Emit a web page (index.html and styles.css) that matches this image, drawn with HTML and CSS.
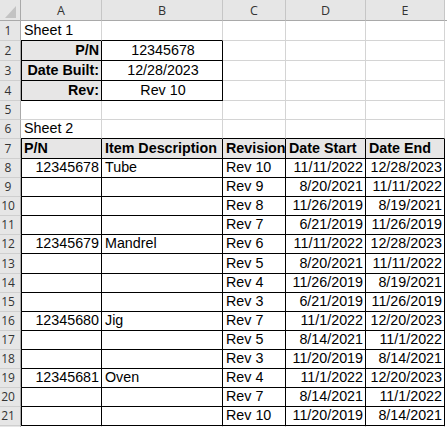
FILE: index.html
```html
<!DOCTYPE html>
<html>
<head>
<meta charset="utf-8">
<link rel="stylesheet" href="styles.css">
</head>
<body>
<div class="sheet">
  <!-- column headers -->
  <div class="corner"><svg width="21" height="21" viewBox="0 0 21 21"><polygon points="16,6 16,18 5,18" fill="#c3c3c3"/></svg></div>
  <div class="h">A</div><div class="h">B</div><div class="h">C</div><div class="h">D</div><div class="h">E</div><div class="h x"></div>

  <!-- 1 -->
  <div class="rh">1</div><div class="c bb">Sheet 1</div><div class="c bb"></div><div class="c"></div><div class="c"></div><div class="c"></div><div class="x"></div>
  <!-- 2 -->
  <div class="rh">2</div><div class="c bx bl fill b r">P/N</div><div class="c bx ctr">12345678</div><div class="c"></div><div class="c"></div><div class="c"></div><div class="x"></div>
  <!-- 3 -->
  <div class="rh">3</div><div class="c bx bl fill b r">Date Built:</div><div class="c bx ctr">12/28/2023</div><div class="c"></div><div class="c"></div><div class="c"></div><div class="x"></div>
  <!-- 4 -->
  <div class="rh">4</div><div class="c bx bl fill b r">Rev:</div><div class="c bx ctr">Rev 10</div><div class="c"></div><div class="c"></div><div class="c"></div><div class="x"></div>
  <!-- 5 -->
  <div class="rh">5</div><div class="c"></div><div class="c"></div><div class="c"></div><div class="c"></div><div class="c"></div><div class="x"></div>
  <!-- 6 -->
  <div class="rh">6</div><div class="c bb">Sheet 2</div><div class="c bb"></div><div class="c bb"></div><div class="c bb"></div><div class="c bb"></div><div class="x"></div>
  <!-- 7 -->
  <div class="rh">7</div><div class="c bx bl fill b">P/N</div><div class="c bx fill b">Item Description</div><div class="c bx fill b">Revision</div><div class="c bx fill b">Date Start</div><div class="c bx fill b">Date End</div><div class="x"></div>
  <!-- 8 -->
  <div class="rh">8</div><div class="c bx bl r">12345678</div><div class="c bx">Tube</div><div class="c bx">Rev 10</div><div class="c bx r">11/11/2022</div><div class="c bx r">12/28/2023</div><div class="x"></div>
  <!-- 9 -->
  <div class="rh">9</div><div class="c bx bl r"></div><div class="c bx"></div><div class="c bx">Rev 9</div><div class="c bx r">8/20/2021</div><div class="c bx r">11/11/2022</div><div class="x"></div>
  <!-- 10 -->
  <div class="rh">10</div><div class="c bx bl r"></div><div class="c bx"></div><div class="c bx">Rev 8</div><div class="c bx r">11/26/2019</div><div class="c bx r">8/19/2021</div><div class="x"></div>
  <!-- 11 -->
  <div class="rh">11</div><div class="c bx bl r"></div><div class="c bx"></div><div class="c bx">Rev 7</div><div class="c bx r">6/21/2019</div><div class="c bx r">11/26/2019</div><div class="x"></div>
  <!-- 12 -->
  <div class="rh">12</div><div class="c bx bl r">12345679</div><div class="c bx">Mandrel</div><div class="c bx">Rev 6</div><div class="c bx r">11/11/2022</div><div class="c bx r">12/28/2023</div><div class="x"></div>
  <!-- 13 -->
  <div class="rh">13</div><div class="c bx bl r"></div><div class="c bx"></div><div class="c bx">Rev 5</div><div class="c bx r">8/20/2021</div><div class="c bx r">11/11/2022</div><div class="x"></div>
  <!-- 14 -->
  <div class="rh">14</div><div class="c bx bl r"></div><div class="c bx"></div><div class="c bx">Rev 4</div><div class="c bx r">11/26/2019</div><div class="c bx r">8/19/2021</div><div class="x"></div>
  <!-- 15 -->
  <div class="rh">15</div><div class="c bx bl r"></div><div class="c bx"></div><div class="c bx">Rev 3</div><div class="c bx r">6/21/2019</div><div class="c bx r">11/26/2019</div><div class="x"></div>
  <!-- 16 -->
  <div class="rh">16</div><div class="c bx bl r">12345680</div><div class="c bx">Jig</div><div class="c bx">Rev 7</div><div class="c bx r">11/1/2022</div><div class="c bx r">12/20/2023</div><div class="x"></div>
  <!-- 17 -->
  <div class="rh">17</div><div class="c bx bl r"></div><div class="c bx"></div><div class="c bx">Rev 5</div><div class="c bx r">8/14/2021</div><div class="c bx r">11/1/2022</div><div class="x"></div>
  <!-- 18 -->
  <div class="rh">18</div><div class="c bx bl r"></div><div class="c bx"></div><div class="c bx">Rev 3</div><div class="c bx r">11/20/2019</div><div class="c bx r">8/14/2021</div><div class="x"></div>
  <!-- 19 -->
  <div class="rh">19</div><div class="c bx bl r">12345681</div><div class="c bx">Oven</div><div class="c bx">Rev 4</div><div class="c bx r">11/1/2022</div><div class="c bx r">12/20/2023</div><div class="x"></div>
  <!-- 20 -->
  <div class="rh">20</div><div class="c bx bl r"></div><div class="c bx"></div><div class="c bx">Rev 7</div><div class="c bx r">8/14/2021</div><div class="c bx r">11/1/2022</div><div class="x"></div>
  <!-- 21 -->
  <div class="rh">21</div><div class="c bx bl r"></div><div class="c bx"></div><div class="c bx">Rev 10</div><div class="c bx r">11/20/2019</div><div class="c bx r">8/14/2021</div><div class="x"></div>
  <!-- tail -->
  <div class="rh tail"></div><div class="c tail"></div><div class="c tail"></div><div class="c tail"></div><div class="c tail"></div><div class="c tail"></div><div class="x"></div>
</div>
</body>
</html>
```

FILE: styles.css
```css
html, body {
  margin: 0;
  padding: 0;
  background: #ffffff;
}

.sheet {
  display: grid;
  width: 447px;
  height: 427px;
  overflow: hidden;
  grid-template-columns: 21px 81px 121px 63px 80px 79px 1fr;
  grid-template-rows: 21px repeat(4, 20px) 19px 19px 20px repeat(5, 19px) 20px repeat(8, 19px) 1fr;
  font-family: "Liberation Sans", Arial, sans-serif;
  font-size: 14.3px;
  color: #000;
}

.sheet > div {
  box-sizing: border-box;
  overflow: hidden;
  white-space: nowrap;
  min-width: 0;
  min-height: 0;
}

.corner {
  background: #e6e6e6;
  border-right: 1px solid #a9a9a9;
  border-bottom: 1px solid #a9a9a9;
  line-height: 0;
}

.h {
  background: #e6e6e6;
  border-right: 1px solid #c6c6c6;
  border-bottom: 1px solid #a9a9a9;
  display: flex;
  align-items: center;
  justify-content: center;
  font-family: "Open Sans", "Noto Sans", sans-serif;
  font-size: 12.5px;
  color: #333;
  padding-top: 1px;
}

.h.x {
  border-right: none;
}

.rh {
  background: #e6e6e6;
  border-right: 1px solid #a9a9a9;
  border-bottom: 1px solid #cfcfcf;
  display: flex;
  align-items: flex-end;
  justify-content: center;
  padding-right: 4px;
  padding-bottom: 1px;
  font-family: "Open Sans", "Noto Sans", sans-serif;
  font-size: 12px;
  line-height: 17px;
  color: #333;
}

.c {
  border-right: 1px solid #d4d4d4;
  border-bottom: 1px solid #d4d4d4;
  display: flex;
  align-items: flex-end;
  justify-content: flex-start;
  padding: 0 1px 1px 3px;
  line-height: 17px;
}

.tail {
  border-bottom: none;
}

.x {
  background: #ffffff;
}

.bb {
  border-bottom-color: #000;
}

.bx {
  border-right-color: #000;
  border-bottom-color: #000;
}

.bl {
  box-shadow: inset 1px 0 0 #000;
}

.fill {
  background: #e7e6e6;
}

.b {
  font-weight: bold;
}

.r {
  justify-content: flex-end;
  padding-right: 2px;
}

.ctr {
  justify-content: center;
}
```
